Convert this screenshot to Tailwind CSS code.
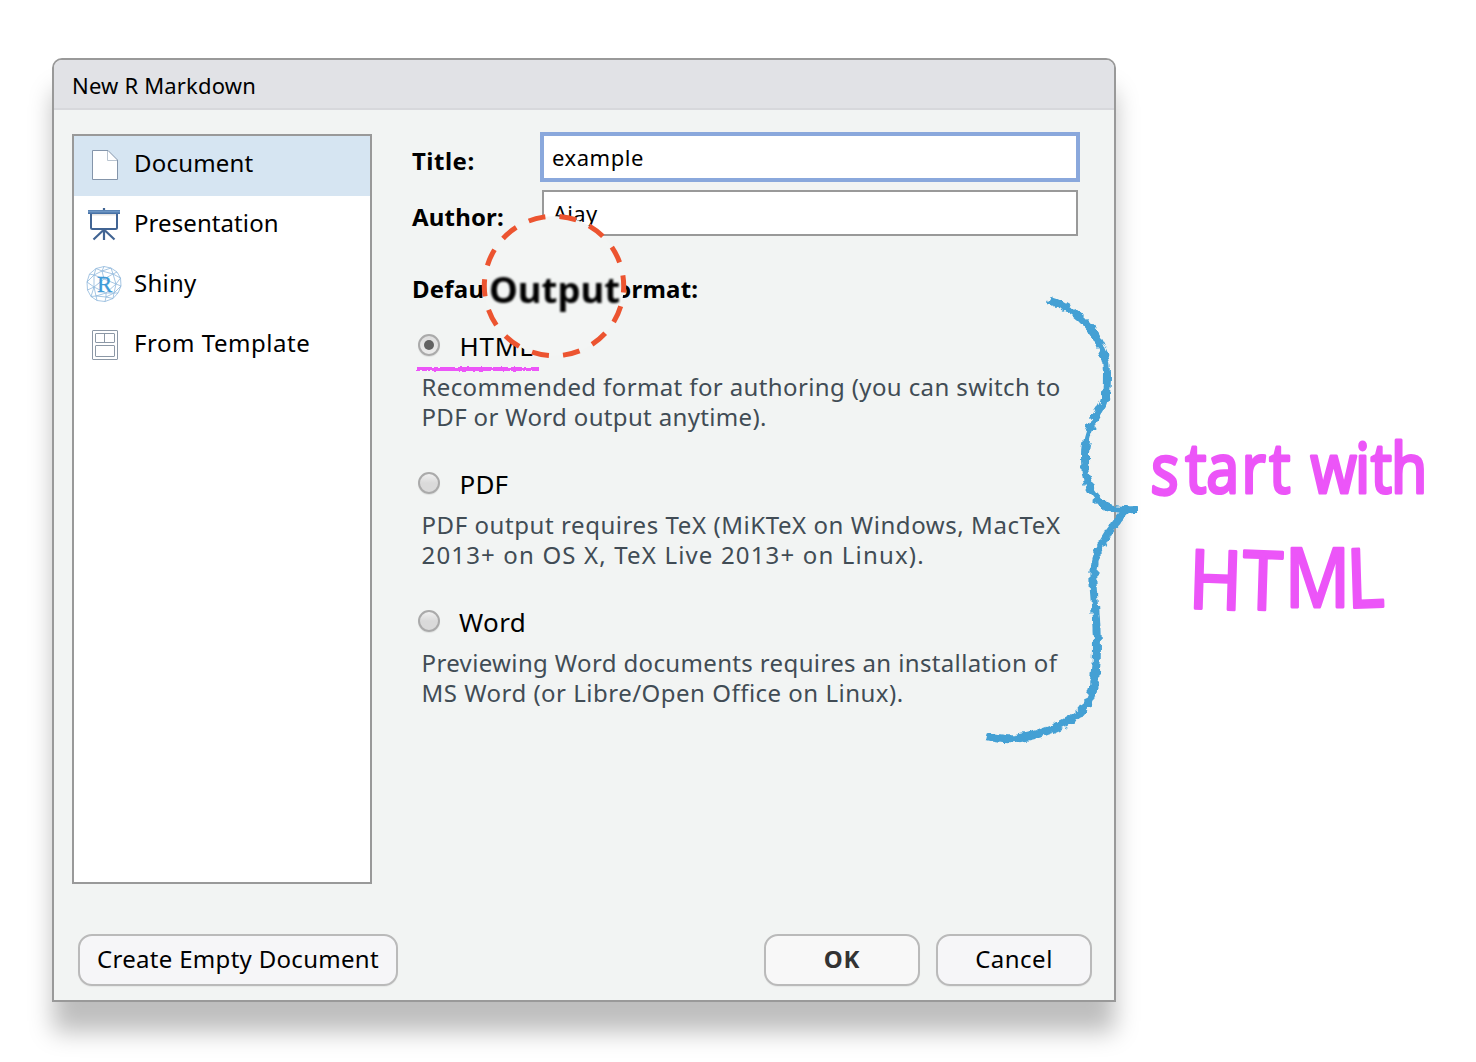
<!DOCTYPE html>
<html lang="en">
<head>
<meta charset="utf-8">
<title>New R Markdown</title>
<script src="https://cdn.jsdelivr.net/npm/@tailwindcss/browser@4"></script>
</head>
<body class="relative h-[1062px] w-[1476px] overflow-hidden bg-white pl-[52px] pt-[58px] font-['Noto_Sans','Open_Sans',sans-serif] text-black">

<!-- Dialog -->
<div class="flex h-[944px] w-[1064px] flex-col rounded-t-[10px] border-2 border-[#999] bg-[#f2f4f3] shadow-[0_31px_24px_-1px_rgba(0,0,0,0.26)]">
  <header class="flex h-[50px] shrink-0 items-center rounded-t-[8px] border-b-2 border-[#d7d8dc] bg-[#e1e2e6] pl-[18px] pt-px text-[22px] leading-[30px] tracking-[0.18px]">New R Markdown</header>

  <div class="flex grow pl-[18px]">
    <!-- Document types -->
    <nav class="mt-6 h-[750px] w-[300px] shrink-0 border-2 border-[#999] bg-white text-[24px] leading-[30px]">
      <div class="flex h-[60px] items-center bg-[#d6e5f2]">
        <svg class="mb-[2px] ml-3 h-9 w-9 shrink-0" viewBox="0 0 36 36"><path d="M6.500 3.500H22L31.500 13V32.500H6.500Z" fill="#fff" stroke="#8495aa"/><path d="M21.500 4V13.500H31" fill="none" stroke="#b9c4d0"/></svg>
        <span class="ml-3 pb-[6px] tracking-[0.2px]">Document</span>
      </div>
      <div class="flex h-[60px] items-center">
        <svg class="ml-3 h-9 w-9 shrink-0" viewBox="0 0 36 36"><path d="M18 0V3M18 22V32M17 22.500L7.500 31.500M19 22.500L28.500 31.500" fill="none" stroke="#416493" stroke-width="2.200"/><path d="M5 5H31V19.500Q31 21 29.500 21H6.500Q5 21 5 19.500Z" fill="#fff" stroke="#416493" stroke-width="2"/><path d="M6 6.500H30" stroke="#e3e3e3" stroke-width="2"/><path d="M2 2H34V6H2Z" fill="#4872a6"/><path d="M2 3.500H34" stroke="#6d96c4" stroke-width="2"/></svg>
        <span class="ml-3 pb-[6px] tracking-[0.08px]">Presentation</span>
      </div>
      <div class="flex h-[60px] items-center">
        <svg class="mb-1 ml-3 h-9 w-9 shrink-0" viewBox="0 0 36 36"><g fill="none" stroke="#8fb8dc" stroke-width=".8"><path d="M18 .500L25 2L31 6L34.500 12L35 20L32 27L27 32.500L19 35.500L11 34.500L5 30.500L1.500 24L1 16L3.500 8L10 2.500Z"/><path d="M10 2.500L16 5L25 2L27 8L31 6M16 5L18 .500M16 5L27 8L34.500 12L30 18L27 8L18 13L16 5L8 9L10 2.500M8 9L3.500 8M8 9L1 16L8 21L8 9L18 13L8 21L1.500 24M8 21L10 30L5 30.500L8 21L20 27L30 18L18 13M30 18L35 20L28 27L30 18M28 27L32 27M28 27L27 32.500L20 31L28 27L20 27L20 31L19 35.500M20 31L10 30L11 34.500M20 27L10 30"/></g><text transform="translate(18.500 26) scale(.95 1)" text-anchor="middle" font-family="Liberation Serif, serif" font-size="24" fill="#3f9bd8" stroke="#3f9bd8" stroke-width=".3">R</text></svg>
        <span class="ml-3 pb-[6px] tracking-[0.24px]">Shiny</span>
      </div>
      <div class="flex h-[60px] items-center">
        <svg class="mb-1 ml-3 h-9 w-9 shrink-0" viewBox="0 0 36 36" fill="#fff" stroke="#8c98a6"><rect x="6.500" y="4.500" width="25" height="29" rx=".5"/><rect x="9.500" y="7.500" width="19" height="9" rx=".5"/><path d="M18.500 7.500V16.500"/><rect x="9.500" y="19.500" width="19" height="11" rx=".5"/></svg>
        <span class="ml-3 pb-[6px] tracking-[0.54px]">From Template</span>
      </div>
    </nav>

    <!-- Document settings -->
    <main class="ml-10 w-[680px] pt-[22px] text-[24px] leading-[30px]">
      <div class="flex h-[50px]">
        <label class="w-32 pt-[14px] font-bold tracking-[0.5px]">Title:</label>
        <div class="h-[50px] w-[540px] border-4 border-[#8aa8dc] bg-white pl-2 pt-[6px] text-[22px] tracking-[0.55px]">example</div>
      </div>
      <div class="mt-2 flex h-[46px]">
        <label class="w-[130px] pt-3 font-bold tracking-[0.17px]">Author:</label>
        <div class="h-[46px] w-[536px] border-2 border-[#999] bg-white pl-[9px] pt-[6px] text-[22px] tracking-[0.31px]">Ajay</div>
      </div>
      <div class="mt-[38px] font-bold tracking-[0.23px]">Default Output Format:</div>

      <div class="mt-[27px]">
        <div class="flex h-[30px] text-[26px]">
          <span class="ml-[6px] mt-[3px] flex h-[22px] w-[22px] items-center justify-center rounded-full border-2 border-[#aaa] bg-linear-to-b from-[#dedede] to-[#ececec] shadow-[0_1px_1px_rgba(0,0,0,0.08)]"><i class="h-[10px] w-[10px] rounded-full bg-[#626262]"></i></span>
          <span class="ml-[19.500px] tracking-[0.8px]">HTML</span>
        </div>
        <p class="mt-[11px] whitespace-nowrap pl-[9.500px] text-[#414c55]"><span class="tracking-[0.38px]">Recommended format for authoring (you can switch to</span><br><span class="tracking-[0.34px]">PDF or Word output anytime).</span></p>
      </div>
      <div class="mt-[37px]">
        <div class="flex h-[30px] text-[26px]">
          <span class="ml-[6px] mt-[3px] h-[22px] w-[22px] rounded-full border-2 border-[#aaa] bg-linear-to-b from-[#f0f0f0] to-[#dadada] to-50% shadow-[0_1px_1px_rgba(0,0,0,0.08)]"></span>
          <span class="ml-[19.500px] tracking-[0.2px]">PDF</span>
        </div>
        <p class="mt-[11px] whitespace-nowrap pl-[9.500px] text-[#414c55]"><span class="tracking-[0.57px]">PDF output requires TeX (MiKTeX on Windows, MacTeX</span><br><span class="tracking-[1.16px]">2013+ on OS X, TeX Live 2013+ on Linux).</span></p>
      </div>
      <div class="mt-[37px]">
        <div class="flex h-[30px] text-[26px]">
          <span class="ml-[6px] mt-[3px] h-[22px] w-[22px] rounded-full border-2 border-[#aaa] bg-linear-to-b from-[#f0f0f0] to-[#dadada] to-50% shadow-[0_1px_1px_rgba(0,0,0,0.08)]"></span>
          <span class="ml-[19px] tracking-[0.4px]">Word</span>
        </div>
        <p class="mt-[11px] whitespace-nowrap pl-[9.500px] text-[#414c55]"><span class="tracking-[0.36px]">Previewing Word documents requires an installation of</span><br><span class="tracking-[0.49px]">MS Word (or Libre/Open Office on Linux).</span></p>
      </div>
    </main>
  </div>

  <footer class="flex h-[66px] shrink-0 gap-4 pl-6 pr-[22px] text-[24px] leading-[30px]">
    <button class="mr-auto h-[52px] w-[320px] rounded-[14px] border-2 border-[#bababa] bg-[#f6f6f8] pb-[2px] tracking-[0.3px] shadow-[0_1px_1px_rgba(0,0,0,0.05)]">Create Empty Document</button>
    <button class="h-[52px] w-[156px] rounded-[14px] border-2 border-[#bababa] bg-[#f8f8f8] pb-[2px] font-bold tracking-[0.8px] text-[#333] shadow-[0_1px_1px_rgba(0,0,0,0.05)]">OK</button>
    <button class="h-[52px] w-[156px] rounded-[14px] border-2 border-[#bababa] bg-[#f6f6f8] pb-[2px] tracking-[0.5px] shadow-[0_1px_1px_rgba(0,0,0,0.05)]">Cancel</button>
  </footer>
</div>

<!-- Hand-drawn annotations over the dialog -->
<svg class="pointer-events-none absolute left-0 top-0 h-[1062px] w-[1476px]" viewBox="0 0 1476 1062">
  <defs>
    <filter id="rough" filterUnits="userSpaceOnUse" x="900" y="250" width="300" height="550" color-interpolation-filters="sRGB"><feTurbulence type="fractalNoise" baseFrequency=".17" numOctaves="1" seed="4"/><feDisplacementMap in="SourceGraphic" scale="9" xChannelSelector="R" yChannelSelector="G"/></filter>
    <filter id="chalk" filterUnits="userSpaceOnUse" x="400" y="355" width="160" height="30" color-interpolation-filters="sRGB"><feTurbulence type="fractalNoise" baseFrequency=".3" numOctaves="1" seed="2"/><feDisplacementMap in="SourceGraphic" scale="3" xChannelSelector="R" yChannelSelector="G"/></filter>
    <filter id="soft" filterUnits="userSpaceOnUse" x="480" y="260" width="150" height="60" color-interpolation-filters="sRGB"><feGaussianBlur stdDeviation=".8"/></filter>
  </defs>

  <circle cx="554" cy="286" r="69.700" fill="#f3f5f4" stroke="#ec5430" stroke-width="5" stroke-dasharray="17.200 14.081" transform="rotate(-8.800 554 286)"/>
  <g filter="url(#soft)"><text x="489" y="303" font-family="Noto Sans, sans-serif" font-size="36.500" font-weight="700">Output</text></g>
  <path d="M417 369H539" stroke="#ec55f8" stroke-width="4" filter="url(#chalk)"/>

  <g fill="none" stroke="#44a0d4" stroke-width="8" filter="url(#rough)">
    <path d="M1048 300C1069 306 1085 320 1095 335C1103 348 1107 359 1107 372C1107 388 1107 400 1100 410C1092 422 1085 436 1085 455C1085 476 1087 484 1093 493C1103 508 1110 511 1138 510"/>
    <path d="M1126 511C1112 525 1103 540 1097 554C1091 569 1094 590 1095 605C1097 630 1098 650 1096 671C1094 692 1089 704 1079 714C1062 727 1041 735 1015 739Q1003 740 986 736"/>
  </g>

  <g font-family="Noto Sans, sans-serif" fill="#ec55f8" stroke="#ec55f8" stroke-linejoin="round">
    <text transform="scale(.84 1)" y="493.500" font-size="70" stroke-width="3.200" x="1369 1411 1436 1478 1511 1541 1560 1613 1632 1656" rotate="3 0 0 0 0 0 0 0 0 0">start&#160;with</text>
    <text transform="scale(.88 1)" y="608 609 607 608" font-size="82" stroke-width="2.800" x="1350 1411 1460 1531" rotate="2 2 0 -2">HTML</text>
  </g>
</svg>
</body>
</html>
